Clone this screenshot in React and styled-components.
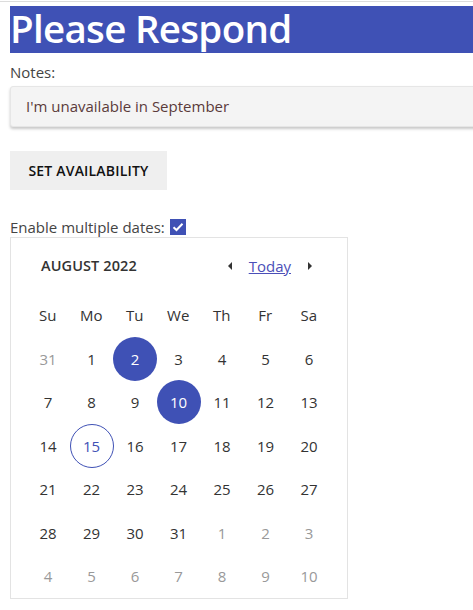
import React, { useState } from 'react';
import styled, { createGlobalStyle, css } from 'styled-components';

const GlobalStyle = createGlobalStyle`
  html, body {
    margin: 0;
    padding: 0;
    background: #fff;
    overflow-x: hidden;
  }
  body {
    font-family: "Open Sans", "Noto Sans", sans-serif;
    color: #333;
  }
`;

const Page = styled.div`
  margin-top: 1px;
  border-top: 1px solid #dcdcdc;
  padding: 4px 0 0 10px;
`;

const Title = styled.h1`
  margin: 0;
  height: 47px;
  line-height: 45px;
  background: #3f51b5;
  color: #fff;
  font-size: 38.5px;
  font-weight: 600;
  letter-spacing: -0.7px;
  white-space: nowrap;
`;

const FieldLabel = styled.label`
  display: block;
  margin-top: 9px;
  font-size: 15px;
  line-height: 20px;
  color: #444;
`;

const NotesInput = styled.input`
  display: block;
  box-sizing: border-box;
  width: calc(100% + 20px);
  height: 41px;
  margin-top: 4px;
  padding: 0 15px 2px;
  border: 1px solid #e6e6e6;
  border-radius: 3px;
  background: #f4f4f4;
  box-shadow: 0 2px 3px rgba(0, 0, 0, 0.22);
  font-family: inherit;
  font-size: 15px;
  color: #5b3b3b;
  outline: none;
`;

const ActionButton = styled.button`
  display: block;
  margin-top: 24px;
  width: 157px;
  height: 39px;
  border: none;
  background: #efefef;
  font-family: inherit;
  font-size: 14px;
  font-weight: 600;
  letter-spacing: 0.2px;
  color: #111;
  cursor: pointer;
`;

const OptionRow = styled.label`
  display: flex;
  align-items: center;
  gap: 5px;
  margin-top: 27px;
  height: 20px;
  font-size: 15px;
  color: #444;
`;

const Check = styled.span`
  display: inline-flex;
  align-items: center;
  justify-content: center;
  width: 16px;
  height: 16px;
  background: #3f51b5;
`;

const Calendar = styled.div`
  box-sizing: border-box;
  width: 338px;
  border: 1px solid #e3e3e3;
  padding: 0 15px;
`;

const CalHeader = styled.div`
  display: flex;
  align-items: center;
  height: 55px;
  padding: 0 0 0 15px;
`;

const MonthTitle = styled.div`
  flex: 1;
  font-size: 14.5px;
  font-weight: 600;
  color: #333;
  letter-spacing: 0.1px;
`;

const Nav = styled.div`
  display: flex;
  align-items: center;
  gap: 16px;
  margin-right: 19px;
`;

const Arrow = styled.button`
  border: none;
  background: none;
  padding: 0;
  width: 6px;
  height: 10px;
  display: flex;
  cursor: pointer;
`;

const TodayLink = styled.a`
  font-size: 15px;
  color: #4b4fb8;
  text-decoration: underline;
  cursor: pointer;
`;

const Grid = styled.div`
  display: grid;
  grid-template-columns: repeat(7, 43.5px);
  grid-auto-rows: 43.5px;
`;

const WeekDay = styled.div`
  display: flex;
  align-items: center;
  justify-content: center;
  font-size: 15px;
  color: #333;
`;

const Day = styled.div`
  display: flex;
  align-items: center;
  justify-content: center;
  box-sizing: border-box;
  width: 44px;
  height: 44px;
  border-radius: 50%;
  font-size: 15px;
  color: ${(p) => (p.muted ? '#999' : '#333')};
  cursor: pointer;
  ${(p) => p.selected && css`
    background: #3f51b5;
    color: #fff;
  `}
  ${(p) => p.today && css`
    border: 1px solid #3f51b5;
    color: #3f51b5;
  `}
`;

const weekDays = ['Su', 'Mo', 'Tu', 'We', 'Th', 'Fr', 'Sa'];

function buildDays() {
  const days = [{ n: 31, muted: true }];
  for (let i = 1; i <= 31; i += 1) days.push({ n: i });
  for (let i = 1; i <= 10; i += 1) days.push({ n: i, muted: true });
  return days;
}

export default function App() {
  const [notes, setNotes] = useState("I'm unavailable in September");
  const [multi, setMulti] = useState(true);
  const [selected] = useState([2, 10]);
  const days = buildDays();

  return (
    <>
      <GlobalStyle />
      <Page>
        <Title>Please Respond</Title>
        <FieldLabel htmlFor="notes">Notes:</FieldLabel>
        <NotesInput id="notes" value={notes} onChange={(e) => setNotes(e.target.value)} />
        <ActionButton>SET AVAILABILITY</ActionButton>
        <OptionRow onClick={() => setMulti(!multi)}>
          Enable multiple dates:
          <Check>
            {multi && (
              <svg width="12" height="10" viewBox="0 0 12 10">
                <path d="M1.5 5.2 L4.5 8 L10.5 1.8" fill="none" stroke="#fff" strokeWidth="2" />
              </svg>
            )}
          </Check>
        </OptionRow>
        <Calendar>
          <CalHeader>
            <MonthTitle>AUGUST 2022</MonthTitle>
            <Nav>
              <Arrow aria-label="previous">
                <svg width="6" height="10" viewBox="0 0 6 10"><path d="M5 1 L1 5 L5 9 Z" fill="#333" /></svg>
              </Arrow>
              <TodayLink>Today</TodayLink>
              <Arrow aria-label="next">
                <svg width="6" height="10" viewBox="0 0 6 10"><path d="M1 1 L5 5 L1 9 Z" fill="#333" /></svg>
              </Arrow>
            </Nav>
          </CalHeader>
          <Grid>
            {weekDays.map((d) => <WeekDay key={d}>{d}</WeekDay>)}
            {days.map((d, i) => (
              <Day
                key={i}
                muted={d.muted}
                selected={!d.muted && selected.includes(d.n)}
                today={!d.muted && d.n === 15}
              >
                {d.n}
              </Day>
            ))}
          </Grid>
        </Calendar>
      </Page>
    </>
  );
}
